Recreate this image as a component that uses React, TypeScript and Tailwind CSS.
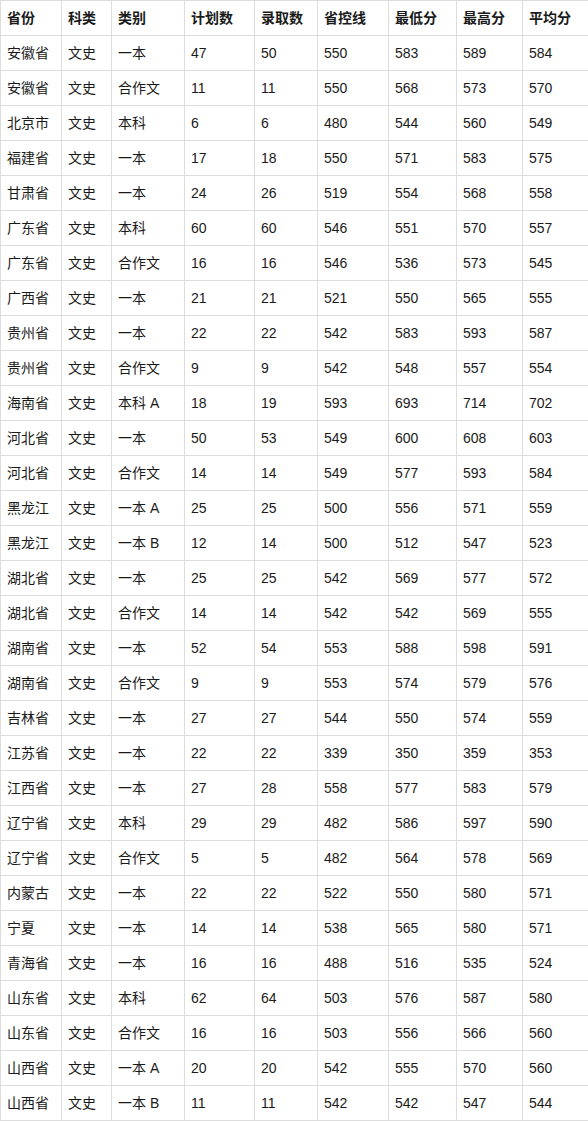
import React from "react";

const header = ["省份", "科类", "类别", "计划数", "录取数", "省控线", "最低分", "最高分", "平均分"];
const widths = [61, 50, 73, 70, 63, 71, 68, 66, 66];

const rows: string[][] = [
  ["安徽省", "文史", "一本", "47", "50", "550", "583", "589", "584"],
  ["安徽省", "文史", "合作文", "11", "11", "550", "568", "573", "570"],
  ["北京市", "文史", "本科", "6", "6", "480", "544", "560", "549"],
  ["福建省", "文史", "一本", "17", "18", "550", "571", "583", "575"],
  ["甘肃省", "文史", "一本", "24", "26", "519", "554", "568", "558"],
  ["广东省", "文史", "本科", "60", "60", "546", "551", "570", "557"],
  ["广东省", "文史", "合作文", "16", "16", "546", "536", "573", "545"],
  ["广西省", "文史", "一本", "21", "21", "521", "550", "565", "555"],
  ["贵州省", "文史", "一本", "22", "22", "542", "583", "593", "587"],
  ["贵州省", "文史", "合作文", "9", "9", "542", "548", "557", "554"],
  ["海南省", "文史", "本科 A", "18", "19", "593", "693", "714", "702"],
  ["河北省", "文史", "一本", "50", "53", "549", "600", "608", "603"],
  ["河北省", "文史", "合作文", "14", "14", "549", "577", "593", "584"],
  ["黑龙江", "文史", "一本 A", "25", "25", "500", "556", "571", "559"],
  ["黑龙江", "文史", "一本 B", "12", "14", "500", "512", "547", "523"],
  ["湖北省", "文史", "一本", "25", "25", "542", "569", "577", "572"],
  ["湖北省", "文史", "合作文", "14", "14", "542", "542", "569", "555"],
  ["湖南省", "文史", "一本", "52", "54", "553", "588", "598", "591"],
  ["湖南省", "文史", "合作文", "9", "9", "553", "574", "579", "576"],
  ["吉林省", "文史", "一本", "27", "27", "544", "550", "574", "559"],
  ["江苏省", "文史", "一本", "22", "22", "339", "350", "359", "353"],
  ["江西省", "文史", "一本", "27", "28", "558", "577", "583", "579"],
  ["辽宁省", "文史", "本科", "29", "29", "482", "586", "597", "590"],
  ["辽宁省", "文史", "合作文", "5", "5", "482", "564", "578", "569"],
  ["内蒙古", "文史", "一本", "22", "22", "522", "550", "580", "571"],
  ["宁夏", "文史", "一本", "14", "14", "538", "565", "580", "571"],
  ["青海省", "文史", "一本", "16", "16", "488", "516", "535", "524"],
  ["山东省", "文史", "本科", "62", "64", "503", "576", "587", "580"],
  ["山东省", "文史", "合作文", "16", "16", "503", "556", "566", "560"],
  ["山西省", "文史", "一本 A", "20", "20", "542", "555", "570", "560"],
  ["山西省", "文史", "一本 B", "11", "11", "542", "542", "547", "544"],
];

export default function App() {
  return (
    <div
      className="w-[588px] bg-white text-[14px] text-[#1a1a1a]"
      style={{ fontFamily: '"Liberation Sans", "Noto Sans CJK SC", sans-serif' }}
    >
      <table className="w-[588px] table-fixed border-collapse">
        <colgroup>
          {widths.map((w, i) => (
            <col key={i} style={{ width: w }} />
          ))}
        </colgroup>
        <thead>
          <tr className="h-[35px]">
            {header.map((h, i) => (
              <th
                key={i}
                className="border border-[#dcdcdc] px-[6px] text-left align-middle font-bold leading-none"
              >
                {h}
              </th>
            ))}
          </tr>
        </thead>
        <tbody>
          {rows.map((r, ri) => (
            <tr key={ri} className="h-[35px]">
              {r.map((c, ci) => (
                <td
                  key={ci}
                  className="border border-[#dcdcdc] px-[6px] text-left align-middle leading-none"
                >
                  {c}
                </td>
              ))}
            </tr>
          ))}
        </tbody>
      </table>
    </div>
  );
}
